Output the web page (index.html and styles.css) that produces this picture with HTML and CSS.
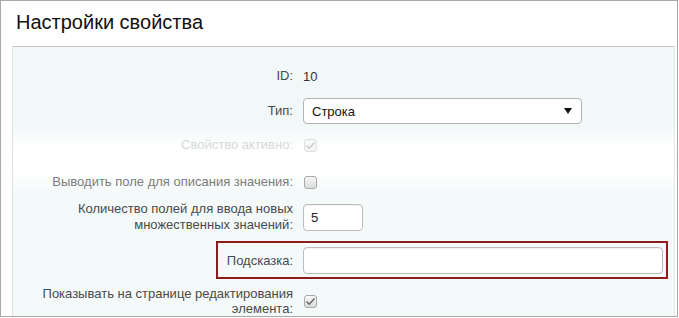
FILE: index.html
```html
<!DOCTYPE html>
<html lang="ru">
<head>
  <meta charset="UTF-8">
  <meta name="viewport" content="width=device-width, initial-scale=1.0">
  <title>Настройки свойства</title>
  <link rel="stylesheet" href="styles.css">
</head>
<body>
  <div class="frame">
    <div class="header">
      <h1>Настройки свойства</h1>
    </div>

    <div class="panel">
      <div class="row row-id">
        <span class="label">ID:</span>
        <span class="value">10</span>
      </div>

      <div class="row row-type">
        <span class="label">Тип:</span>
        <div class="select">
          <span>Строка</span>
          <svg class="arrow" width="8" height="6" viewBox="0 0 8 6"><polygon points="0,0 8,0 4,6" fill="#111"/></svg>
        </div>
      </div>

      <div class="row row-active disabled">
        <span class="label">Свойство активно:</span>
        <span class="check checked">
          <svg width="11" height="9" viewBox="0 0 11 9"><polyline points="1.5,4.5 4.2,7.2 9.5,1.5" fill="none" stroke="#777" stroke-width="1.6"/></svg>
        </span>
      </div>

      <div class="row row-descr">
        <span class="label">Выводить поле для описания значения:</span>
        <span class="check"></span>
      </div>

      <div class="row row-count">
        <span class="label">Количество полей для ввода новых множественных значений:</span>
        <div class="input input-small">5</div>
      </div>

      <div class="row row-hint">
        <span class="label">Подсказка:</span>
        <div class="input input-wide"></div>
      </div>

      <div class="row row-show">
        <span class="label">Показывать на странице редактирования элемента:</span>
        <span class="check checked">
          <svg width="11" height="9" viewBox="0 0 11 9"><polyline points="1.5,4.5 4.2,7.2 9.5,1.5" fill="none" stroke="#6a6a6a" stroke-width="1.6"/></svg>
        </span>
      </div>
    </div>
  </div>
</body>
</html>
```

FILE: styles.css
```css
body {
  margin: 0;
  padding: 0;
  background-color: #ffffff;
  font-family: "Liberation Sans", Arial, sans-serif;
  font-size: 13px;
  color: #4a4a4a;
}

.frame {
  width: 678px;
  height: 317px;
  box-sizing: border-box;
  border: 1px solid #a8a8a8;
  display: flex;
  flex-direction: column;
  overflow: hidden;
}

.header {
  height: 45px;
  flex-shrink: 0;
  padding-left: 15px;
  box-sizing: border-box;
}

.header h1 {
  margin: 0;
  padding-top: 9px;
  font-size: 20px;
  font-weight: normal;
  line-height: 24px;
  color: #111;
}

.panel {
  flex: 1;
  margin-left: 11px;
  margin-right: 2px;
  border-top: 1px solid #c4c8c8;
  border-left: 1px solid #dde2e2;
  border-right: 1px solid #e3e8e8;
  background: linear-gradient(to bottom, #f2f7f7 0px, #f2f7f7 78px, #ffffff 100px, #ffffff 124px, #f4f9f9 146px, #f4f9f9 100%);
  padding-top: 17px;
  display: flex;
  flex-direction: column;
}

.row {
  display: grid;
  grid-template-columns: 280px 1fr;
  column-gap: 10px;
  align-items: center;
}

.label {
  text-align: right;
  line-height: 16px;
}

.value {
  color: #333;
}

.row-id {
  height: 24px;
}

.row-type {
  margin-top: 10px;
}

.row-active {
  margin-top: 13px;
  height: 14px;
}

.row-descr {
  margin-top: 23px;
  height: 14px;
}

.row-descr .label {
  color: #7c7c7c;
}

.row-count {
  margin-top: 13px;
}

.row-hint {
  margin-top: 8px;
  margin-left: 203px;
  width: 452px;
  box-sizing: border-box;
  border: 2px solid #8c1d1d;
  padding: 4px 3px 3px 0;
  grid-template-columns: 75px 1fr;
  column-gap: 10px;
}

.row-show {
  margin-top: 7px;
}

.row-show .label {
  line-height: 15px;
}

.disabled .label {
  color: #d6d9d9;
}

.disabled .check {
  opacity: 0.35;
}

.select {
  width: 279px;
  height: 26px;
  box-sizing: border-box;
  border: 1px solid #b4b4b4;
  border-radius: 4px;
  background-color: #ffffff;
  display: flex;
  align-items: center;
  justify-content: space-between;
  padding: 0 9px 0 8px;
  color: #111;
}

.input {
  height: 27px;
  box-sizing: border-box;
  border: 1px solid #bcbcbc;
  border-radius: 4px;
  background-color: #ffffff;
  box-shadow: inset 0 1px 1px rgba(0, 0, 0, 0.06);
  padding: 0 7px;
  line-height: 25px;
  color: #222;
}

.input-small {
  width: 60px;
}

.input-wide {
  width: 100%;
}

.check {
  width: 13px;
  height: 13px;
  box-sizing: border-box;
  border: 1px solid #a9a9a9;
  border-radius: 3px;
  background: linear-gradient(to bottom, #f8f8f8, #d9dcdc);
  display: flex;
  align-items: center;
  justify-content: center;
  margin-left: 1px;
}
```
